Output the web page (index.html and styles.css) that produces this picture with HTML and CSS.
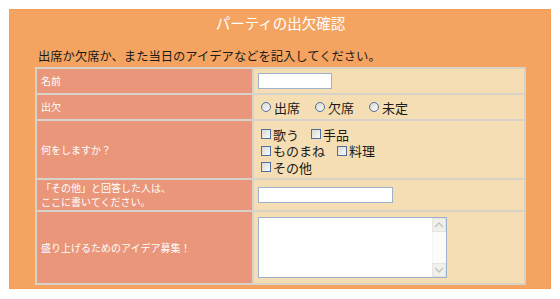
FILE: index.html
```html
<!DOCTYPE html>
<html lang="ja">
<head>
    <meta charset="UTF-8">
    <title>パーティの出欠確認</title>
    <link rel="stylesheet" href="styles.css">
</head>
<body>
    <div class="panel">
        <h1 class="title">パーティの出欠確認</h1>
        <p class="lead">出席か欠席か、また当日のアイデアなどを記入してください。</p>

        <table class="form-table">
            <tr class="row-name">
                <th>名前</th>
                <td><input type="text" class="text-short"></td>
            </tr>
            <tr class="row-attend">
                <th>出欠</th>
                <td>
                    <div class="opt-line">
                        <label class="opt"><input type="radio" name="attend">出席</label>
                        <label class="opt"><input type="radio" name="attend">欠席</label>
                        <label class="opt"><input type="radio" name="attend">未定</label>
                    </div>
                </td>
            </tr>
            <tr class="row-plan">
                <th>何をしますか？</th>
                <td class="checks">
                    <div class="opt-line">
                        <label class="opt"><input type="checkbox">歌う</label>
                        <label class="opt"><input type="checkbox">手品</label>
                    </div>
                    <div class="opt-line">
                        <label class="opt"><input type="checkbox">ものまね</label>
                        <label class="opt"><input type="checkbox">料理</label>
                    </div>
                    <div class="opt-line">
                        <label class="opt"><input type="checkbox">その他</label>
                    </div>
                </td>
            </tr>
            <tr class="row-other">
                <th>「その他」と回答した人は、<br>ここに書いてください。</th>
                <td><input type="text" class="text-long"></td>
            </tr>
            <tr class="row-idea">
                <th>盛り上げるためのアイデア募集！</th>
                <td>
                    <div class="memo">
                        <textarea></textarea>
                        <div class="scroll">
                            <span class="arrow">
                                <svg width="10" height="6" viewBox="0 0 10 6"><path d="M1 5 L5 1 L9 5" fill="none" stroke="#c4c2bc" stroke-width="1.4"/></svg>
                            </span>
                            <span class="track"></span>
                            <span class="arrow">
                                <svg width="10" height="6" viewBox="0 0 10 6"><path d="M1 1 L5 5 L9 1" fill="none" stroke="#c4c2bc" stroke-width="1.4"/></svg>
                            </span>
                        </div>
                    </div>
                </td>
            </tr>
        </table>
    </div>
</body>
</html>
```

FILE: styles.css
```css
* {
    margin: 0;
    padding: 0;
    box-sizing: border-box;
}

body {
    margin: 9px;
    background: #fff;
    font-family: "Noto Sans CJK JP", "DejaVu Sans", sans-serif;
}

.panel {
    width: 542px;
    height: 280px;
    background: #f4a460;
    border: 1px solid #f39d55;
    padding: 1px 24px 0 25px;
}

.title {
    color: #fff;
    font-size: 14.5px;
    font-weight: normal;
    line-height: 24px;
    text-align: center;
}

.lead {
    margin-top: 12px;
    padding-left: 3px;
    font-size: 12.3px;
    line-height: 18px;
    color: #1a1a1a;
}

.form-table {
    margin-top: 2px;
    width: 491px;
    border-collapse: separate;
    border-spacing: 2px;
    background: #d7d3cb;
}

.form-table th {
    width: 215px;
    background: #e9967a;
    color: #fff;
    font-size: 10px;
    font-weight: normal;
    line-height: 14px;
    text-align: left;
    padding: 0 4px;
    vertical-align: middle;
}

.form-table td {
    background: #f5deb3;
    padding: 0 4px;
    font-size: 13px;
    color: #1a1a1a;
    vertical-align: middle;
}

.row-name { height: 24px; }
.row-attend { height: 24px; }
.row-plan { height: 57px; }
.row-other { height: 30px; }
.row-idea { height: 71px; }

.form-table td.checks {
    vertical-align: top;
    padding-top: 5px;
}

.opt-line {
    display: flex;
    align-items: center;
    height: 16.5px;
}

.opt {
    display: flex;
    align-items: center;
    line-height: 15px;
}

.row-attend .opt {
    margin-right: 12px;
}

.checks .opt {
    margin-right: 9px;
}

input[type="radio"],
input[type="checkbox"] {
    appearance: none;
    -webkit-appearance: none;
    width: 10px;
    height: 10px;
    margin: 0 2px 0 3px;
    border: 1px solid #4f6f9c;
    background: linear-gradient(135deg, #d9d8d2, #fbfbf8);
}

input[type="radio"] {
    border-radius: 50%;
    margin-right: 3px;
}

input[type="text"] {
    display: block;
    height: 16px;
    border: 1px solid #9cb1cb;
    background: #fff;
    outline: none;
}

.text-short {
    width: 74px;
}

.text-long {
    width: 135px;
}

.memo {
    display: flex;
    width: 189px;
    height: 61px;
    border: 1px solid #9cb1cb;
    background: #fff;
}

.memo textarea {
    flex: 1;
    border: none;
    outline: none;
    resize: none;
    background: #fff;
}

.scroll {
    width: 14px;
    display: flex;
    flex-direction: column;
    background: #fbfbfa;
}

.arrow {
    height: 14px;
    display: flex;
    align-items: center;
    justify-content: center;
    background: #f1f0ec;
    border: 1px solid #e6e4de;
}

.track {
    flex: 1;
    border-left: 1px dotted #e8ecf4;
}
```
